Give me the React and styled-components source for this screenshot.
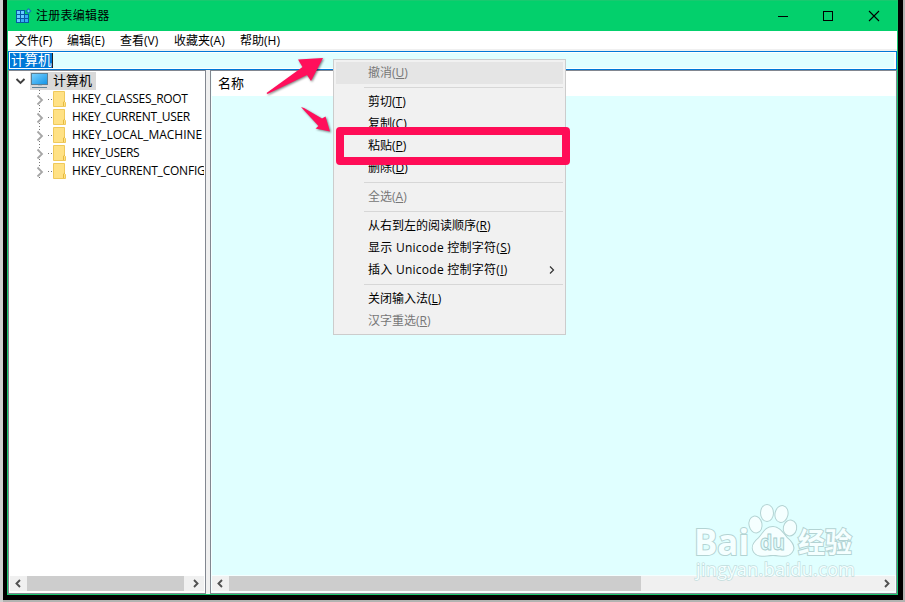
import React from 'react';
import styled, { createGlobalStyle } from 'styled-components';

const menus = [
  { label: '文件(F)', width: 52 },
  { label: '编辑(E)', width: 53 },
  { label: '查看(V)', width: 54 },
  { label: '收藏夹(A)', width: 66 },
  { label: '帮助(H)', width: 60 },
];

const keys = [
  { name: 'HKEY_CLASSES_ROOT', spacing: -0.29 },
  { name: 'HKEY_CURRENT_USER', spacing: -0.29 },
  { name: 'HKEY_LOCAL_MACHINE', spacing: -0.05 },
  { name: 'HKEY_USERS', spacing: -0.35 },
  { name: 'HKEY_CURRENT_CONFIG', spacing: -0.22 },
];

const contextItems = [
  { label: '撤消', hotkey: 'U', disabled: true, active: true },
  null,
  { label: '剪切', hotkey: 'T' },
  { label: '复制', hotkey: 'C' },
  { label: '粘贴', hotkey: 'P' },
  { label: '删除', hotkey: 'D' },
  null,
  { label: '全选', hotkey: 'A', disabled: true },
  null,
  { label: '从右到左的阅读顺序', hotkey: 'R' },
  { label: '显示 Unicode 控制字符', hotkey: 'S', wide: true },
  { label: '插入 Unicode 控制字符', hotkey: 'I', wide: true, submenu: true },
  null,
  { label: '关闭输入法', hotkey: 'L' },
  { label: '汉字重选', hotkey: 'R', disabled: true },
];

const App = () => (
  <Desktop>
    <GlobalStyle />
    <Shadow>
      <Window>
        <TitleBar>
          <RegeditIcon />
          <Title>注册表编辑器</Title>
          <WindowButtons />
        </TitleBar>
        <MenuBar>
          {menus.map(m => <MenuName key={m.label} $width={m.width}>{m.label}</MenuName>)}
        </MenuBar>
        <AddressBar>
          <Address><Selected>计算机</Selected></Address>
        </AddressBar>
        <Panes>
          <TreePane>
            <Tree>
              <RootRow>
                <RootChevron width="12" height="18" viewBox="0 0 12 18">
                  <path d="M1.5 8 L5.5 12 L9.5 8" fill="none" stroke="#404040" strokeWidth="1.9" />
                </RootChevron>
                <RootLabel>
                  <ComputerIcon />
                  计算机
                </RootLabel>
              </RootRow>
              {keys.map(k => (
                <KeyRow key={k.name}>
                  <KeyIcon />
                  <KeyName $spacing={k.spacing}>{k.name}</KeyName>
                </KeyRow>
              ))}
            </Tree>
            <ScrollBar thumb={157} />
          </TreePane>
          <ValuePane>
            <ColumnHeader>名称</ColumnHeader>
            <Values />
            <ScrollBar thumb={412} />
          </ValuePane>
        </Panes>
      </Window>
    </Shadow>

    <ContextMenu>
      {contextItems.map((item, i) => item ? (
        <ContextItem key={i} $disabled={item.disabled} $active={item.active} $wide={item.wide}>
          <span>{item.label}(<u>{item.hotkey}</u>)</span>
          {item.submenu && (
            <svg width="6" height="10" viewBox="0 0 6 10">
              <path d="M1 1.5 L4.5 5 L1 8.5" fill="none" stroke="#333" strokeWidth="1.2" />
            </svg>
          )}
        </ContextItem>
      ) : <Separator key={i} />)}
    </ContextMenu>
    <Highlight />
    <Arrows />
    <Watermark />
  </Desktop>
);

export default App;

const RegeditIcon = () => (
  <svg width="16" height="16" viewBox="0 0 16 16">
    <rect x="0" y="2" width="13" height="13" fill="#0759a5" />
    {[0, 1, 2].map(row => [0, 1, 2].map(col => (
      (row || col < 2) ? (
        <rect
          key={row + '-' + col}
          x={1 + col * 4}
          y={3 + row * 4}
          width="3"
          height="3"
          fill={row + col > 2 ? '#36adf5' : '#66ccff'}
        />
      ) : null
    )))}
    <path d="M9 2 h4 v4 h-4 z" fill="#03d06c" />
    <path d="M12.5 0 L15.5 3 L12.5 6 L9.5 3 Z" fill="#1477b5" />
    <path d="M12.5 1.6 L13.9 3 L12.5 4.4 L11.1 3 Z" fill="#66d4ff" />
  </svg>
);

const WindowButtons = () => (
  <Buttons width="102" height="12" viewBox="0 0 102 12">
    <path d="M0 6.5 H10" stroke="#000" />
    <rect x="45.5" y="1.5" width="9" height="9" fill="none" stroke="#000" />
    <path d="M91 1 L101 11 M101 1 L91 11" stroke="#000" strokeWidth="1.1" />
  </Buttons>
);

const ComputerIcon = () => (
  <svg width="18" height="18" viewBox="0 0 18 18">
    <defs>
      <linearGradient id="screen" x1="0" y1="0" x2="1" y2="1">
        <stop offset="0" stopColor="#7ad2ff" />
        <stop offset="1" stopColor="#1193e6" />
      </linearGradient>
    </defs>
    <rect x="0.5" y="1.5" width="16" height="11" fill="url(#screen)" stroke="#5c7f94" />
    <path d="M1 15.5 H16" stroke="#5e8398" />
    <path d="M7 13.5 H11" stroke="#b5c4cc" />
  </svg>
);

const KeyIcon = () => (
  <svg width="40" height="18" viewBox="0 0 40 18">
    <path d="M9.5 0 V4 M9.5 15 V18 M18 9.5 H23" stroke="#777" strokeDasharray="1 2" />
    <path d="M7.5 5.5 L12 10 L7.5 14.5" fill="none" stroke="#a6a6a6" strokeWidth="1.8" />
    <path d="M23.5 1.5 H34.5 V11.5 L35.5 12.5 V16.5 H23.5 Z" fill="#ffe184" stroke="#efc95b" />
    <path d="M33.5 16 V12 L35 11" fill="none" stroke="#e5b93f" />
  </svg>
);

const ScrollBar = ({ thumb }) => (
  <Track>
    <svg width="17" height="15" viewBox="0 0 17 15">
      <path d="M10 4 L6.5 7.5 L10 11" fill="none" stroke="#505050" strokeWidth="1.9" />
    </svg>
    <Thumb $width={thumb} />
    <Spacer />
    <svg width="17" height="15" viewBox="0 0 17 15">
      <path d="M7 4 L10.5 7.5 L7 11" fill="none" stroke="#505050" strokeWidth="1.9" />
    </svg>
  </Track>
);

const Arrows = () => (
  <ArrowLayer width="80" height="90" viewBox="260 50 80 90">
    <path d="M266.5 93 L302.5 67 L298 59.5 L323 58 L311 81 L307 75 L267.5 94 Z" fill="#ff0f5b" />
    <path d="M301 107 L304 108 L322 118.5 L325.5 116.5 L330 131.5 L315.5 128.5 L318.5 126 Z" fill="#ff0f5b" />
  </ArrowLayer>
);

const Watermark = () => (
  <Mark width="175" height="84" viewBox="690 500 175 84">
    <g fill="#f5ffff" stroke="#b3d3d3" strokeWidth="2" paintOrder="stroke">
      <text x="694" y="555" fontSize="35" fontWeight="700" textLength="55" lengthAdjust="spacingAndGlyphs">Bai</text>
      <ellipse cx="755.5" cy="524.5" rx="6" ry="8" transform="rotate(-12 755.5 524.5)" />
      <ellipse cx="767" cy="513" rx="6" ry="8" />
      <ellipse cx="781.5" cy="514" rx="6" ry="8" transform="rotate(12 781.5 514)" />
      <ellipse cx="790" cy="528" rx="6.2" ry="7.5" transform="rotate(12 790 528)" />
      <path d="M773 527 C779 527 782 532 787 538 C793 543 795 548 792 552 C788 558 781 555 773 555 C765 555 758 558 754 552 C751 547 753 543 759 538 C764 532 766 527 773 527 Z" />
      <text x="798" y="553" fontSize="28" fontWeight="700" textLength="54" lengthAdjust="spacingAndGlyphs">经验</text>
    </g>
    <text x="760" y="550" fontSize="22" fontWeight="700" fill="#e0fcfc" stroke="#a8cccc" strokeWidth="1" textLength="25" lengthAdjust="spacingAndGlyphs">du</text>
    <text x="696" y="576" fontSize="18" fill="#f4ffff" stroke="#c2dddd" strokeWidth="1.4" paintOrder="stroke" textLength="159">jingyan.baidu.com</text>
  </Mark>
);

const GlobalStyle = createGlobalStyle`
  * {
    box-sizing: border-box;
  }

  body {
    margin: 0;
    overflow: hidden;
    color: #000;
    font-family: "Open Sans", "Noto Sans CJK SC", sans-serif;
    font-size: 12px;
  }

  svg {
    display: block;
    flex-shrink: 0;
  }
`;

const Desktop = styled.div`
  position: relative;
  width: 905px;
  height: 602px;
  padding: 0 2px 2px 3px;
  background: linear-gradient(to right, #d0d0d0 3px, #b2b3b1 3px);
`;

const Shadow = styled.div`
  height: 600px;
  padding: 0 5px 5px 4px;
  background: #000;
`;

const Window = styled.div`
  display: flex;
  flex-direction: column;
  height: 595px;
  border: 1px solid #19c96f;
  background: #f0f0f0;
`;

const TitleBar = styled.div`
  display: flex;
  align-items: center;
  height: 30px;
  padding-left: 8px;
  background: #03d06c;
`;

const Title = styled.div`
  flex: 1;
  margin-left: 4px;
  letter-spacing: 0.25px;
  line-height: 28px;
`;

const Buttons = styled.svg`
  margin-right: 17px;
`;

const MenuBar = styled.div`
  display: flex;
  height: 20px;
  padding-left: 7px;
  background: #fff;
  border-bottom: 2px solid #f0f0f0;
`;

const MenuName = styled.div`
  width: ${props => props.$width}px;
  line-height: 20px;
  white-space: nowrap;
`;

const AddressBar = styled.div`
  height: 19px;
  padding: 1px 2px 1px 1px;
  border: 1px solid #0078d7;
  background: #fff;
`;

const Address = styled.div`
  display: flex;
  height: 15px;
  background: #e0ffff;
`;

const Selected = styled.span`
  width: 43px;
  padding-left: 1px;
  border-right: 1px solid #222;
  background: #0078d7;
  color: #fff;
  font-size: 13.5px;
  line-height: 15px;
  white-space: nowrap;
`;

const Panes = styled.div`
  display: flex;
  flex: 1;
  gap: 4px;
`;

const Pane = styled.div`
  display: flex;
  flex-direction: column;
  border: 1px solid #828790;
  min-width: 0;
`;

const TreePane = styled(Pane)`
  width: 198px;
  padding: 1px 1px 2px;
  background: #fff;
`;

const Tree = styled.div`
  flex: 1;
  overflow: hidden;
`;

const RootRow = styled.div`
  display: flex;
  height: 18px;
  padding-left: 5px;
`;

const RootChevron = styled.svg`
  margin-top: -1px;
`;

const RootLabel = styled.div`
  display: flex;
  gap: 4px;
  width: 66px;
  margin-left: 3px;
  padding-left: 1px;
  background: #d9d9d9;
  font-size: 13px;
  line-height: 17px;
  white-space: nowrap;
`;

const KeyRow = styled.div`
  display: flex;
  height: 18px;
  padding-left: 20px;
`;

const KeyName = styled.div`
  margin-left: 2px;
  letter-spacing: ${props => props.$spacing}px;
  line-height: 17px;
  white-space: nowrap;
`;

const ValuePane = styled(Pane)`
  flex: 1;
  padding: 0 1px 2px;
  background: #f4ffff;
`;

const ColumnHeader = styled.div`
  height: 25px;
  padding-left: 6px;
  background: #fff;
  font-size: 13px;
  line-height: 24px;
`;

const Values = styled.div`
  flex: 1;
  margin: 0 -1px 1px 0;
  background: #e0ffff;
`;

const Track = styled.div`
  display: flex;
  height: 15px;
  background: #f0f0f0;
`;

const Thumb = styled.div`
  width: ${props => props.$width}px;
  background: #cdcdcd;
`;

const Spacer = styled.div`
  flex: 1;
`;

const ContextMenu = styled.div`
  position: absolute;
  top: 59px;
  left: 333px;
  width: 233px;
  padding: 2px;
  border: 1px solid #ccc;
  background: #f1f1f1;
`;

const ContextItem = styled.div`
  display: flex;
  align-items: center;
  justify-content: space-between;
  height: 22px;
  padding: 0 8px 0 32px;
  background: ${props => props.$active ? '#e5e5e5' : 'none'};
  color: ${props => props.$disabled ? '#777' : '#000'};
  letter-spacing: ${props => props.$wide ? '0.26px' : 'normal'};
  line-height: 22px;
  white-space: nowrap;

  u {
    text-underline-offset: 1px;
  }
`;

const Separator = styled.div`
  height: 1px;
  margin: 3px 0 3px 28px;
  background: #d7d7d7;
`;

const Highlight = styled.div`
  position: absolute;
  top: 127px;
  left: 336px;
  width: 234px;
  height: 38px;
  border-radius: 4px;
  border: 8px solid #ff0d57;
`;

const ArrowLayer = styled.svg`
  position: absolute;
  top: 50px;
  left: 260px;
  filter: drop-shadow(1px 1px 1px rgba(0, 0, 0, 0.5));
`;

const Mark = styled.svg`
  position: absolute;
  top: 500px;
  left: 690px;
  font-family: "Open Sans", "Noto Sans CJK SC", sans-serif;
`;
